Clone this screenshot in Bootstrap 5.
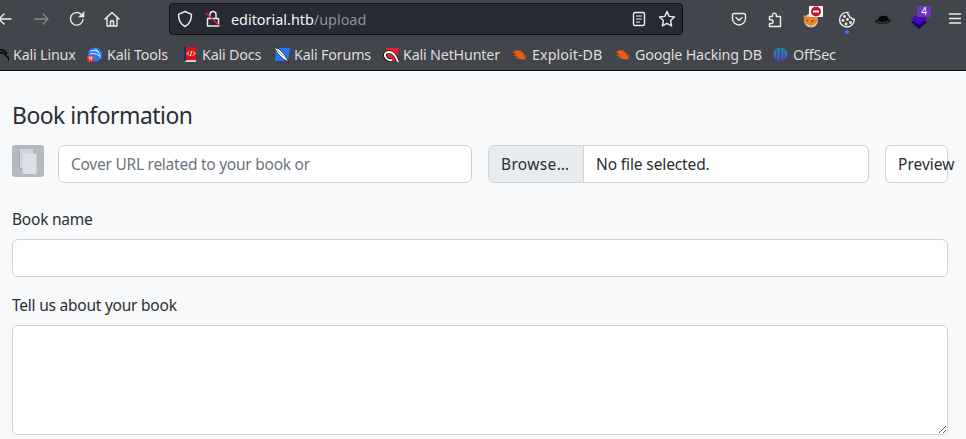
<!DOCTYPE html>
<html lang="en">
<head>
<meta charset="utf-8">
<meta name="viewport" content="width=device-width, initial-scale=1">
<title>Editorial upload</title>
<link href="https://cdn.jsdelivr.net/npm/bootstrap@5.3.0/dist/css/bootstrap.min.css" rel="stylesheet">
<style>
body{font-family:"Noto Sans",sans-serif;background:#f8f9fb;color:#2a2e32;height:439px;overflow:hidden}
.chrome{background:#42454c;height:71px;border-bottom:1px solid #0c0c12;color:#dedede}
.topbar{height:38px;display:grid;grid-template-columns:169px 514px 1fr}
.navset{display:grid;grid-template-columns:36px 36px 35px 1fr;margin-left:-5px}
.address{margin-top:3px;height:32px;background:#272a35;border:1px solid #0f1016;border-radius:4px;padding:0 6px 0 7px}
.lock{margin-left:12px}
.star{margin-left:11px}
.url{font-size:14.4px;margin-left:10px;padding-top:1px;color:#f4f4f4;white-space:nowrap}
.url span{color:#8f9198}
.exts{display:grid;grid-template-columns:36px 36px 36px 36px 36px 38px 30px;margin-left:38px}
.menu{margin-left:6px}
.marks{height:32px;margin-left:-7px;padding-top:1px;display:grid;grid-template-columns:94px 95px 92px 109px 129px 103px 158px 1fr;font-size:14.3px;letter-spacing:-.18px;align-items:center}
.marks>div{white-space:nowrap;display:flex;align-items:center;gap:4px}
.marks .wide{letter-spacing:.06px}
.marks svg{margin-top:1px}
svg{display:block;flex:none}
.ln{fill:none;stroke:#ededed;stroke-width:1.4;stroke-linecap:round;stroke-linejoin:round}
.page{padding:30px 18px 0 12px}
h1.title{font-size:22.9px;font-weight:400;line-height:29px;margin-bottom:15px;letter-spacing:-.5px}
.controls{display:grid;grid-template-columns:30px 414px 381px 63px;column-gap:16px}
.form-control{font-size:15.5px;height:38px;border-color:#ced4da;background:#fff;border-radius:6px;color:#2a2e32;letter-spacing:-.1px}
.urlfield{letter-spacing:-.25px}
.urlfield::placeholder{color:#6c757d}
.filebox{display:flex;padding:0;overflow:hidden}
.browse{background:#e9ecef;width:95px;border-right:1px solid #ced4da;padding:7px 0 5px 12px;white-space:nowrap;letter-spacing:.35px}
.chosen{padding:7px 12px 5px;white-space:nowrap;letter-spacing:-.12px}
.preview{white-space:nowrap;overflow:visible;padding:7px 12px 5px;letter-spacing:0}
.form-label{font-size:15.5px;line-height:24px;margin-bottom:8px;letter-spacing:-.23px}
textarea.form-control{height:110px}
</style>
<script src="https://cdn.jsdelivr.net/npm/bootstrap@5.3.0/dist/js/bootstrap.bundle.min.js"></script>
</head>
<body>
<header class="chrome">
<div class="topbar">
 <div class="navset align-items-center">
  <svg width="20" height="20" viewBox="0 0 20 20" class="ln"><path d="M4 10H16M9 5L4 10l5 5"/></svg>
  <svg width="20" height="20" viewBox="0 0 20 20" class="ln" opacity=".4"><path d="M4 10H17M12 5l5 5-5 5"/></svg>
  <svg width="20" height="20" viewBox="0 0 20 20" class="ln"><path d="M16 10.500a6.300 6.300 0 1 1-2-5.300"/><path d="M17 3v5h-5z" fill="#ededed" stroke-width=".6"/></svg>
  <svg width="20" height="20" viewBox="0 0 20 20" class="ln"><path d="M3 10L10 3.500l7 6.500M5 9v8h10V9M8.500 17v-5h3v5"/></svg>
 </div>
 <div class="address d-flex align-items-center">
  <svg width="16" height="18" viewBox="0 0 16 18" class="ln"><path d="M8 1.500l6.500 2.800C14.500 10 13 14 8 16.500 3 14 1.500 10 1.500 4.300z"/></svg>
  <svg class="ln lock" width="16" height="18" viewBox="0 0 16 18"><path d="M2.500 8.500h11v7.500h-11zM5 8V4.500a3 3 0 0 1 6 0V8"/><path d="M1 3l14 13" stroke="#e22850"/></svg>
  <div class="url">editorial.htb<span>/upload</span></div>
  <svg width="16" height="18" viewBox="0 0 16 18" class="ln ms-auto"><rect x="2.500" y="2.500" width="11" height="13" rx="1.500"/><path d="M5.500 6h5M5.500 9h5M5.500 12h3" stroke-width="1.200"/></svg>
  <svg width="18" height="18" viewBox="0 0 18 18" class="ln star"><path d="M9 1.500l2.200 4.900 5.300.6-3.900 3.600 1 5.400L9 13.400 4.400 16l1-5.400L1.500 7l5.300-.6z"/></svg>
 </div>
 <div class="exts align-items-center">
  <svg width="36" height="34" viewBox="0 0 36 34" class="ln"><path d="M13.500 11.500h9a2 2 0 0 1 2 2v3a6.500 6.500 0 0 1-13 0v-3a2 2 0 0 1 2-2zM15 15.500l3 3 3-3"/></svg>
  <svg width="36" height="34" viewBox="0 0 36 34" class="ln"><path d="M12.500 14.500h3v-1.500a1.900 1.900 0 0 1 3.800 0v1.500h4.200v10h-11v-3h1.700a1.900 1.900 0 0 0 0-3.800h-1.700z"/></svg>
  <svg width="36" height="34" viewBox="0 0 36 34"><circle cx="18" cy="18.500" r="7" fill="#d9c8b2"/><path d="M10 13l4 2 6-1 4 2 1 2-3 4-4 2-5-2-2-4z" fill="#e88424"/><path d="M13 18l2 1M18 20l3-2" stroke="#6b431e"/><rect x="16" y="4" width="14" height="11" rx="1" fill="#fff"/><circle cx="23" cy="9.500" r="5" fill="#c4122f"/><path d="M20 9.500h6" stroke="#fff" stroke-width="2"/></svg>
  <svg width="36" height="34" viewBox="0 0 36 34" class="ln"><path d="M19 10.500A7.300 7.300 0 1 0 25.200 17c-1.500.8-2.700 0-2.700-1.500-1.700.2-2.700-.8-2.300-2.200-1.200-.4-1.700-1.500-1.200-2.800z"/><g fill="#ededed" stroke="none"><circle cx="15.500" cy="14.500" r="1.400"/><circle cx="14" cy="18.500" r="1.400"/><circle cx="18.500" cy="17.500" r="1.400"/><circle cx="17" cy="22" r="1.400"/><circle cx="21.500" cy="20.500" r="1.400"/></g><circle cx="18" cy="30" r="2" fill="#2a7fff" stroke="none"/></svg>
  <svg width="36" height="34" viewBox="0 0 36 34"><ellipse cx="18" cy="19" rx="8" ry="3" fill="#17191c" transform="rotate(-4 18 19)"/><path d="M13.500 19l.5-4q4-2 8-1l1.500 4q-4 3-10 1z" fill="#050506"/><path d="M12 20q6 2 11-1" fill="none" stroke="#4a4c50" stroke-width=".7"/></svg>
  <svg width="38" height="34" viewBox="0 0 38 34"><path d="M10 20l8 7 8-7-8-5z" fill="#1d0075"/><path d="M10 17l8-6 8 6-8 6z" fill="#4b08b8"/><rect x="16" y="4" width="14" height="11" rx="1" fill="#6b37bd"/><text x="23" y="13" fill="#fff" font-size="10" text-anchor="middle">4</text></svg>
  <svg width="20" height="20" viewBox="0 0 20 20" class="ln menu"><path d="M4.500 5h11M4.500 9.500h11M4.500 14h11"/></svg>
 </div>
</div>
<div class="marks">
 <div><svg width="16" height="16" viewBox="0 0 16 16"><path d="M4 3q8-1 10 4M4 6q8-1 9 3 3 1 3 5M8 5q4 1 5 4" fill="none" stroke="#08090a" stroke-width="1.500"/></svg>Kali Linux</div>
 <div><svg width="16" height="16" viewBox="0 0 16 16"><circle cx="8" cy="7.500" r="7" fill="#2578f4"/><path d="M3 4q9-2 10 5M3 7q7-2 11 4M8 2q3 1 4 4" fill="none" stroke="#dbeaff"/><circle cx="3.500" cy="11.500" r="3.500" fill="#e7303b"/><path d="M1.700 10.200h3.800M2.800 10.200v3M4.700 10.200v3" stroke="#fff" stroke-width=".8"/></svg>Kali Tools</div>
 <div><svg width="16" height="16" viewBox="0 0 16 16"><path d="M2 0h12v13H2z" fill="#d81515"/><path d="M2 13h12v2H3z" fill="#d9cccc"/><path d="M2 0h2v14H2z" fill="#153369"/><path d="M7 4.500L5 6.500l2 2M11 4.500l2 2-2 2M9.500 4L8.500 9" stroke="#fff" fill="none"/></svg>Kali Docs</div>
 <div><svg width="16" height="16" viewBox="0 0 16 16"><path d="M2 1h14l-2 13H1z" fill="#2476f4"/><path d="M0 .5l5 1.500 5 5 5 8-6-3-5-5z" fill="#f5f5f5" stroke="#111" stroke-width=".7"/><path d="M3 3l6 6" stroke="#555" stroke-width=".6"/></svg>Kali Forums</div>
 <div><svg width="16" height="16" viewBox="0 0 16 16"><path d="M3 1h13l-3 13H5z" fill="#ed2031"/><path d="M15 15Q12 6 7 5 1 5 2 9q2 5 7 4" fill="none" stroke="#111" stroke-width="3.500"/><path d="M15 15Q12 6 7 5 1 5 2 9q2 5 7 4" fill="none" stroke="#fff" stroke-width="2"/></svg>Kali NetHunter</div>
 <div class="wide"><svg width="16" height="16" viewBox="0 0 16 16"><path d="M2 4l4-1 5 3 2 3 1 3-4 .500-5-1.500-2-4z" fill="#ef5c0c"/><path d="M0 5l5 2M3 11.500l4-2M8 2.500l2 4M15 9l-5-1M1 8.500h4" stroke="#c85218" stroke-width=".8"/></svg>Exploit-DB</div>
 <div><svg width="16" height="16" viewBox="0 0 16 16"><path d="M2 4l4-1 5 3 2 3 1 3-4 .500-5-1.500-2-4z" fill="#ef5c0c"/><path d="M0 5l5 2M3 11.500l4-2M8 2.500l2 4M15 9l-5-1M1 8.500h4" stroke="#c85218" stroke-width=".8"/></svg>Google Hacking DB</div>
 <div><svg width="16" height="16" viewBox="0 0 16 16"><defs><linearGradient id="blue" x2="0" y2="1"><stop stop-color="#1aa0c8"/><stop offset="1" stop-color="#5a32cc"/></linearGradient></defs><path d="M3.500 1.500v12Q-2.500 7.500 3.500 1.500M11.500 1.500v12q6-6 0-12M4.500 1h2.300v12l-2.300 2zM8.200 1h2.300v14l-2.300-2z" fill="url(#blue)"/></svg>OffSec</div>
</div>
</header>
<main class="page">
 <h1 class="title">Book information</h1>
 <div class="controls">
  <svg width="32" height="32" viewBox="0 0 32 32"><rect width="32" height="32" rx="3" fill="#b2b9c0"/><path d="M7 5h14v19H7z" fill="#a3abb5"/><path d="M8 4h13v19H8z" fill="#ced5dc"/><path d="M10.500 9h14v20h-14z" fill="#dae0e5"/></svg>
  <input class="form-control urlfield" placeholder="Cover URL related to your book or">
  <div class="form-control filebox"><span class="browse">Browse…</span><span class="chosen">No file selected.</span></div>
  <div class="form-control preview">Preview</div>
 </div>
 <div class="mt-4"><label class="form-label d-block" for="name">Book name</label><input id="name" class="form-control"></div>
 <div class="mt-3"><label class="form-label d-block" for="about">Tell us about your book</label><textarea id="about" class="form-control"></textarea></div>
</main>
</body>
</html>
